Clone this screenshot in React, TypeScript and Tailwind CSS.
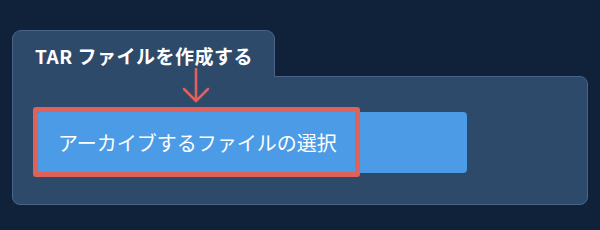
import React from 'react';

const jp = '"Noto Sans CJK JP", "Noto Sans", sans-serif';

// Red down arrow pointing from the tab title to the highlighted button
const DownArrow = () => (
  <svg width="30" height="36" viewBox="0 0 30 36" fill="none">
    <path d="M14 1 V33" stroke="#e0605a" strokeWidth="2.6" strokeLinecap="round" />
    <path d="M2 21 L14 33 L26 21" stroke="#e0605a" strokeWidth="2.6" strokeLinecap="round" strokeLinejoin="round" />
  </svg>
);

export default function App() {
  return (
    <div className="w-[600px] h-[230px] bg-[#10223a] pl-[12px] pt-[30px]" style={{ fontFamily: jp }}>
      <div className="relative flex flex-col">
        {/* Tab */}
        <div className="relative z-10 -mb-px w-[263px] h-[47px] bg-[#2d4a6a] border border-b-0 border-[#4b6586] rounded-t-[9px] pl-[22px] pt-[13px]">
          <span className="text-[19px] font-bold text-white leading-[24px] tracking-[0.5px]">TAR ファイルを作成する</span>
        </div>

        {/* Panel */}
        <div className="w-[576px] h-[129px] bg-[#2d4a6a] border border-[#4b6586] rounded-b-[8px] rounded-tr-[8px] pl-[23px] pt-[35px]">
          <div className="relative w-[431px] h-[61px] bg-[#4b9be6] rounded-[4px] flex items-center pl-[22px]">
            <span className="text-[20px] text-white leading-none">アーカイブするファイルの選択</span>
            <div className="absolute -left-[3px] -top-[5px] w-[327px] h-[70px] border-[5px] border-[#e0605a] rounded-[3px]" />
          </div>
        </div>

        <div className="absolute left-[170px] top-[38px] z-20">
          <DownArrow />
        </div>
      </div>
    </div>
  );
}
